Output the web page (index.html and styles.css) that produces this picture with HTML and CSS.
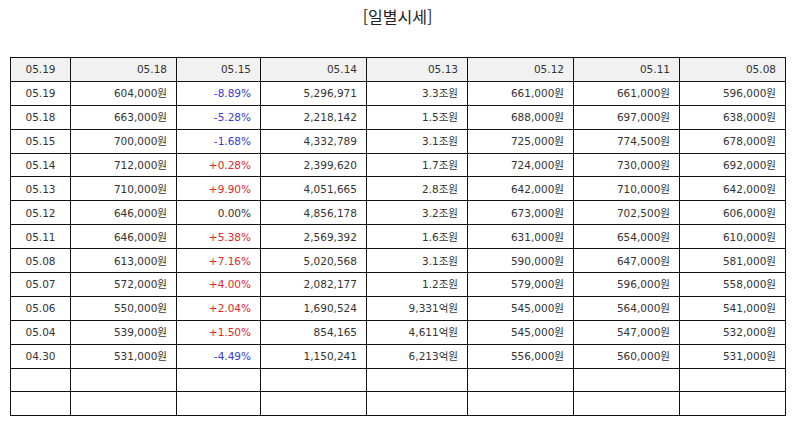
FILE: index.html
```html
<!DOCTYPE html>
<html lang="ko">
<head>
<meta charset="utf-8">
<title>일별시세</title>
<link rel="stylesheet" href="styles.css">
</head>
<body>
<h2 class="title">[일별시세]</h2>
<table class="grid">
  <colgroup>
    <col class="c1"><col class="c2"><col class="c3"><col class="c4"><col class="c5"><col class="c6"><col class="c7"><col class="c8">
  </colgroup>
  <thead>
    <tr><th>05.19</th><th>05.18</th><th>05.15</th><th>05.14</th><th>05.13</th><th>05.12</th><th>05.11</th><th>05.08</th></tr>
  </thead>
  <tbody>
    <tr><td>05.19</td><td>604,000원</td><td class="dn">-8.89%</td><td>5,296,971</td><td>3.3조원</td><td>661,000원</td><td>661,000원</td><td>596,000원</td></tr>
    <tr><td>05.18</td><td>663,000원</td><td class="dn">-5.28%</td><td>2,218,142</td><td>1.5조원</td><td>688,000원</td><td>697,000원</td><td>638,000원</td></tr>
    <tr><td>05.15</td><td>700,000원</td><td class="dn">-1.68%</td><td>4,332,789</td><td>3.1조원</td><td>725,000원</td><td>774,500원</td><td>678,000원</td></tr>
    <tr><td>05.14</td><td>712,000원</td><td class="up">+0.28%</td><td>2,399,620</td><td>1.7조원</td><td>724,000원</td><td>730,000원</td><td>692,000원</td></tr>
    <tr><td>05.13</td><td>710,000원</td><td class="up">+9.90%</td><td>4,051,665</td><td>2.8조원</td><td>642,000원</td><td>710,000원</td><td>642,000원</td></tr>
    <tr><td>05.12</td><td>646,000원</td><td>0.00%</td><td>4,856,178</td><td>3.2조원</td><td>673,000원</td><td>702,500원</td><td>606,000원</td></tr>
    <tr><td>05.11</td><td>646,000원</td><td class="up">+5.38%</td><td>2,569,392</td><td>1.6조원</td><td>631,000원</td><td>654,000원</td><td>610,000원</td></tr>
    <tr><td>05.08</td><td>613,000원</td><td class="up">+7.16%</td><td>5,020,568</td><td>3.1조원</td><td>590,000원</td><td>647,000원</td><td>581,000원</td></tr>
    <tr><td>05.07</td><td>572,000원</td><td class="up">+4.00%</td><td>2,082,177</td><td>1.2조원</td><td>579,000원</td><td>596,000원</td><td>558,000원</td></tr>
    <tr><td>05.06</td><td>550,000원</td><td class="up">+2.04%</td><td>1,690,524</td><td>9,331억원</td><td>545,000원</td><td>564,000원</td><td>541,000원</td></tr>
    <tr><td>05.04</td><td>539,000원</td><td class="up">+1.50%</td><td>854,165</td><td>4,611억원</td><td>545,000원</td><td>547,000원</td><td>532,000원</td></tr>
    <tr><td>04.30</td><td>531,000원</td><td class="dn">-4.49%</td><td>1,150,241</td><td>6,213억원</td><td>556,000원</td><td>560,000원</td><td>531,000원</td></tr>
    <tr><td></td><td></td><td></td><td></td><td></td><td></td><td></td><td></td></tr>
    <tr><td></td><td></td><td></td><td></td><td></td><td></td><td></td><td></td></tr>
  </tbody>
</table>
</body>
</html>
```
FILE: styles.css
```css
html, body {
  margin: 0;
  padding: 0;
  background: #ffffff;
}
body {
  padding: 0 9px 0 10px;
  font-family: "DejaVu Sans", "Noto Sans CJK KR", sans-serif;
  color: #333333;
}
.title {
  margin: 0;
  height: 57px;
  padding-top: 4px;
  box-sizing: border-box;
  text-align: center;
  font-family: "Noto Sans CJK KR", sans-serif;
  font-size: 16px;
  font-weight: normal;
  line-height: 24px;
  color: #222222;
}
.grid {
  width: 775px;
  border-collapse: collapse;
  table-layout: fixed;
  font-size: 10.5px;
}
.c1 { width: 60px; }
.c2 { width: 106px; }
.c3 { width: 84px; }
.c4 { width: 106px; }
.c5 { width: 101px; }
.c6 { width: 106px; }
.c7 { width: 106px; }
.c8 { width: 106px; }
.grid th,
.grid td {
  border: 1px solid #111111;
  height: 22.9px;
  padding: 0 9px 0 4px;
  text-align: right;
  font-weight: normal;
  white-space: nowrap;
  line-height: 14px;
}
.grid th {
  background: #f1f1f1;
}
.grid th:first-child,
.grid td:first-child {
  text-align: center;
  padding: 0;
}
.up { color: #e0272f; }
.dn { color: #3a3ad0; }
```
